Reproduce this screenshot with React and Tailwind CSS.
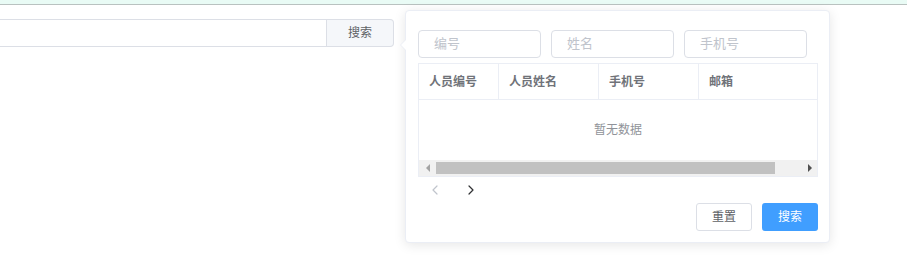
import { ChevronLeft, ChevronRight } from 'lucide-react';

const cols = ['人员编号', '人员姓名', '手机号', '邮箱'];

const App = () => {
  return (
    <div className="relative w-[907px] h-[271px] bg-white overflow-hidden font-['Liberation_Sans','Noto_Sans_CJK_SC',sans-serif]">
      {/* top strip */}
      <div className="h-[5px] bg-[#e9fbf5] border-b border-[#b9c2c0]" />

      {/* search bar */}
      <div className="mt-[14px] flex h-[28px] w-[394px]">
        <div className="flex-1 border border-l-0 border-[#dcdfe6]" />
        <button className="w-[67px] border border-l-0 border-[#dcdfe6] bg-[#f5f7fa] rounded-r-[4px] text-[12px] text-[#606266]">
          搜索
        </button>
      </div>

      {/* popover */}
      <div className="absolute left-[405px] top-[10px] w-[425px] h-[233px] bg-white border border-[#ebeef5] rounded-[4px] shadow-[0_2px_12px_0_rgba(0,0,0,0.1)] px-[12px] pt-[19px]">
        {/* arrow */}
        <div className="absolute left-[-6px] top-[28px] w-0 h-0 border-y-[6px] border-y-transparent border-r-[6px] border-r-[#ebeef5]" />
        <div className="absolute left-[-5px] top-[28px] w-0 h-0 border-y-[6px] border-y-transparent border-r-[6px] border-r-white" />

        <div className="flex gap-[10px] pr-[10px]">
          {['编号', '姓名', '手机号'].map((p) => (
            <div
              key={p}
              className="flex-1 h-[28px] border border-[#dcdfe6] rounded-[4px] flex items-center px-[15px] text-[13px] text-[#c0c4cc]"
            >
              {p}
            </div>
          ))}
        </div>

        {/* table */}
        <div className="mt-[5px] w-[400px] border border-[#ebeef5]">
          <div className="flex h-[36px] border-b border-[#ebeef5] text-[12px] font-bold text-[#707379]">
            {cols.map((c, i) => (
              <div
                key={c}
                className={`flex items-center px-[10px] ${i < 3 ? 'border-r border-[#ebeef5]' : ''} ${i === 0 ? 'w-[80px]' : 'w-[100px]'} ${i === 3 ? 'flex-1' : ''}`}
              >
                {c}
              </div>
            ))}
          </div>
          <div className="h-[60px] flex items-center justify-center text-[12px] text-[#909399]">
            暂无数据
          </div>
          {/* scrollbar */}
          <div className="h-[16px] bg-[#f1f1f1] flex items-center">
            <div className="w-[17px] flex justify-center">
              <div className="w-0 h-0 border-y-[4px] border-y-transparent border-r-[4px] border-r-[#a3a3a3]" />
            </div>
            <div className="w-[339px] h-[12px] bg-[#c1c1c1]" />
            <div className="flex-1 flex justify-end pr-[5px]">
              <div className="w-0 h-0 border-y-[4px] border-y-transparent border-l-[4px] border-l-[#505050]" />
            </div>
          </div>
        </div>

        {/* pager */}
        <div className="flex items-center h-[26px] pl-[9px] gap-[20px]">
          <ChevronLeft className="w-[16px] h-[16px] text-[#c0c4cc]" strokeWidth={1.8} />
          <ChevronRight className="w-[16px] h-[16px] text-[#303133]" strokeWidth={1.8} />
        </div>

        {/* actions */}
        <div className="flex justify-end gap-[10px] w-[400px]">
          <button className="w-[56px] h-[28px] border border-[#dcdfe6] rounded-[3px] bg-white text-[12px] text-[#606266]">
            重置
          </button>
          <button className="w-[56px] h-[28px] rounded-[3px] bg-[#409eff] text-[12px] text-white">
            搜索
          </button>
        </div>
      </div>
    </div>
  );
};

export default App;
